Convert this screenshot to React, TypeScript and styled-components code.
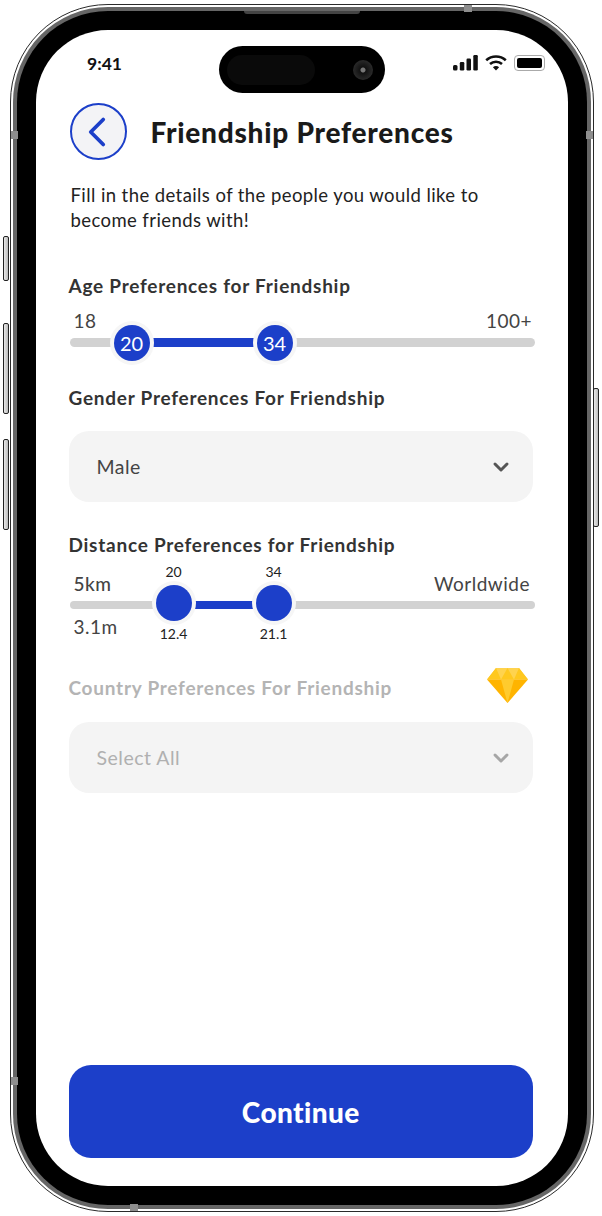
import React from "react";
import styled, { createGlobalStyle } from "styled-components";
import { ChevronDown, ChevronLeft } from "lucide-react";

const GlobalStyle = createGlobalStyle`
  html, body {
    margin: 0;
    padding: 0;
    background: #fff;
  }
  body {
    font-family: "Lato", "Noto Sans", sans-serif;
    color: #2b2b2b;
  }
`;

function App() {
  return (
    <>
      <GlobalStyle />
      <Shell>
        <SideKey $side="left" $top={231} $height={43} />
        <SideKey $side="left" $top={318} $height={89} />
        <SideKey $side="left" $top={434} $height={89} />
        <SideKey $side="right" $top={383} $height={137} />
        <Band $at="top" $offset={453} />
        <Band $at="bottom" $offset={119} />
        <Band $at="left" $offset={1072} />
        <Band $at="left" $offset={126} />
        <Band $at="right" $offset={126} />
        <Rim>
          <Bezel>
            <Speaker />
            <Screen>
              <StatusBar>
                <Time>9:41</Time>
                <Island>
                  <IslandSensor />
                  <Camera />
                </Island>
                <StatusIcons>
                  <svg width="25" height="16" viewBox="0 0 25 16" fill="#111">
                    <rect x="0" y="10" width="4.5" height="5.5" rx="1.5" />
                    <rect x="6.8" y="7" width="4.5" height="8.5" rx="1.2" />
                    <rect x="13.5" y="3.6" width="4.5" height="11.9" rx="1.2" />
                    <rect x="20.3" y="0" width="4.5" height="15.5" rx="1.2" />
                  </svg>
                  <svg width="22" height="16" viewBox="0 0 22 16" fill="none" stroke="#111" strokeWidth="2.6">
                    <path d="M1.2 5.2C6.8 0.2 15.2 0.2 20.8 5.2" />
                    <path d="M5 9C8.4 6 13.6 6 17 9" />
                    <path d="M11 15.4L7.9 12.2C9.7 10.7 12.3 10.7 14.1 12.2Z" fill="#111" stroke="none" />
                  </svg>
                  <Battery>
                    <BatteryFill />
                  </Battery>
                </StatusIcons>
              </StatusBar>

              <Content>
                <Header>
                  <BackButton>
                    <ChevronLeft size={50} strokeWidth={1.8} color="#1c3fc9" />
                  </BackButton>
                  <Title>Friendship Preferences</Title>
                </Header>
                <Intro>
                  Fill in the details of the people you would like to become friends with!
                </Intro>

                <AgeLabel>Age Preferences for Friendship</AgeLabel>
                <ScaleEnds>
                  <span>18</span>
                  <span>100+</span>
                </ScaleEnds>
                <Track>
                  <TrackFill $from={62} $to={205} />
                  <Thumb $at={62}>20</Thumb>
                  <Thumb $at={205}>34</Thumb>
                </Track>

                <GenderLabel>Gender Preferences For Friendship</GenderLabel>
                <Select>
                  Male
                  <ChevronDown size={24} strokeWidth={3} color="#555" />
                </Select>

                <DistanceLabel>Distance Preferences for Friendship</DistanceLabel>
                <ScaleEnds $tall>
                  <strong>5km</strong>
                  <span>Worldwide</span>
                </ScaleEnds>
                <Track $slim>
                  <TrackFill $from={104} $to={204} />
                  <Thumb $at={104} $lift={2}>
                    <ThumbCaption $pos="above">20</ThumbCaption>
                    <ThumbCaption $pos="below">12.4</ThumbCaption>
                  </Thumb>
                  <Thumb $at={204} $lift={2}>
                    <ThumbCaption $pos="above">34</ThumbCaption>
                    <ThumbCaption $pos="below">21.1</ThumbCaption>
                  </Thumb>
                </Track>
                <MilesLabel>3.1m</MilesLabel>

                <PremiumRow>
                  <PremiumLabel>Country Preferences For Friendship</PremiumLabel>
                  <svg width="41" height="35" viewBox="0 0 41 35">
                    <path d="M9 0H32L41 11.5H0Z" fill="#ffd34e" />
                    <path d="M9 0L14 11.5H0Z M32 0L27 11.5H41Z" fill="#ffc81f" />
                    <path d="M20.5 0L27 11.5H14Z" fill="#ffc81f" />
                    <path d="M0 11.5H41L20.5 35Z" fill="#ffb400" />
                    <path d="M14 11.5H27L20.5 35Z" fill="#ffcb2e" />
                  </svg>
                </PremiumRow>
                <Select $muted>
                  Select All
                  <ChevronDown size={24} strokeWidth={3} color="#a6a6a6" />
                </Select>

                <ContinueButton>Continue</ContinueButton>
              </Content>
            </Screen>
          </Bezel>
        </Rim>
      </Shell>
    </>
  );
}

const Shell = styled.div`
  position: relative;
  box-sizing: border-box;
  width: 584px;
  height: 1208px;
  margin: 4px 0 0 10px;
  padding: 2px;
  background: #fff;
  border: 1.5px solid #2a2a2a;
  border-radius: 98px;
`;

const SideKey = styled.div<{ $side: "left" | "right"; $top: number; $height: number }>`
  position: absolute;
  ${(p) => (p.$side === "left" ? "left: -8px;" : "right: -6px;")}
  top: ${(p) => p.$top}px;
  width: 4px;
  height: ${(p) => p.$height}px;
  background: linear-gradient(90deg, #e8e8e8, #bcbcbc);
  border: 1px solid #222;
  border-radius: 2px;
`;

const Band = styled.div<{ $at: "top" | "bottom" | "left" | "right"; $offset: number }>`
  position: absolute;
  z-index: 2;
  background: #8e8e8e;
  ${(p) =>
    p.$at === "top" || p.$at === "bottom"
      ? `left: ${p.$offset}px; ${p.$at}: 0; width: 8px; height: 7px;`
      : `top: ${p.$offset}px; ${p.$at}: 0; width: 7px; height: 8px;`}
`;

const Rim = styled.div`
  box-sizing: border-box;
  height: 100%;
  padding: 4px;
  background: #666;
  border-radius: 95px;
`;

const Bezel = styled.div`
  position: relative;
  box-sizing: border-box;
  height: 100%;
  padding: 19px;
  background: #000;
  border-radius: 91px;
`;

const Speaker = styled.div`
  position: absolute;
  top: 0;
  left: 50%;
  width: 116px;
  height: 3px;
  margin-left: -58px;
  background: #444;
  border-radius: 0 0 4px 4px;
`;

const Screen = styled.div`
  box-sizing: border-box;
  height: 100%;
  overflow: hidden;
  background: #fff;
  border-radius: 72px;
`;

const StatusBar = styled.div`
  display: grid;
  grid-template-columns: 183px 166px 1fr;
  align-items: center;
  height: 47px;
  padding-top: 16px;
`;

const Time = styled.div`
  padding-left: 51px;
  font-size: 17.5px;
  font-weight: 700;
  color: #111;
  margin-top: -13px;
`;

const Island = styled.div`
  display: flex;
  align-items: center;
  justify-content: space-between;
  height: 47px;
  padding: 0 12px 0 8px;
  box-sizing: border-box;
  background: #000;
  border-radius: 24px;
`;

const IslandSensor = styled.div`
  width: 88px;
  height: 30px;
  background: #0a0a0a;
  border-radius: 15px;
`;

const Camera = styled.div`
  box-sizing: border-box;
  width: 20px;
  height: 20px;
  border-radius: 50%;
  background: radial-gradient(circle, #777 0 2px, #111 3px, #2a2a2a 10px);
`;

const StatusIcons = styled.div`
  display: flex;
  align-items: center;
  gap: 7px;
  padding-left: 68px;
  margin-top: -14px;
`;

const Battery = styled.div`
  box-sizing: border-box;
  display: flex;
  width: 31px;
  height: 16px;
  padding: 2px;
  border: 1px solid #aaa;
  border-radius: 4px;
`;

const BatteryFill = styled.div`
  flex: 1;
  background: #000;
  border-radius: 2px;
`;

const Content = styled.div`
  display: flex;
  flex-direction: column;
  padding: 10px 35px 0 32.5px;
`;

const Header = styled.div`
  display: flex;
  align-items: center;
  gap: 24px;
  padding-left: 1px;
`;

const BackButton = styled.div`
  box-sizing: border-box;
  display: flex;
  flex: none;
  align-items: center;
  justify-content: center;
  width: 57px;
  height: 57px;
  padding-right: 3px;
  background: #f3f3f6;
  border: 2.5px solid #1c3fc9;
  border-radius: 50%;
`;

const Title = styled.h1`
  margin: 0;
  font-size: 28px;
  font-weight: 900;
  letter-spacing: 0.75px;
  white-space: nowrap;
  color: #1a1a1a;
`;

const Intro = styled.p`
  margin: 23px 0 0 2px;
  font-size: 18.5px;
  line-height: 25px;
  letter-spacing: 0.41px;
  color: #222;
`;

const SectionLabel = styled.h2`
  margin: 0;
  font-size: 19px;
  line-height: 24px;
  font-weight: 700;
  letter-spacing: 0.75px;
  white-space: nowrap;
  color: #333;
`;

const AgeLabel = styled(SectionLabel)`
  margin-top: 41px;
`;

const GenderLabel = styled(SectionLabel)`
  margin-top: 39px;
`;

const DistanceLabel = styled(SectionLabel)`
  margin-top: 31px;
`;

const PremiumRow = styled.div`
  display: flex;
  align-items: center;
  justify-content: space-between;
  margin-top: 29px;
  padding-right: 5px;
`;

const PremiumLabel = styled(SectionLabel)`
  padding-top: 5px;
  color: #b4b4b4;
`;

const ScaleEnds = styled.div<{ $tall?: boolean }>`
  display: flex;
  justify-content: space-between;
  padding: 0 ${(p) => (p.$tall ? "3px" : "1px")} 0 5px;
  margin-top: ${(p) => (p.$tall ? "13px" : "12px")};
  height: ${(p) => (p.$tall ? "28px" : "22px")};
  font-size: 19px;
  letter-spacing: 0.5px;
  line-height: ${(p) => (p.$tall ? "28px" : "22px")};
  color: #444;

  & strong {
    font-weight: 500;
  }
`;

const Track = styled.div<{ $slim?: boolean }>`
  position: relative;
  height: ${(p) => (p.$slim ? "8px" : "9px")};
  margin-top: ${(p) => (p.$slim ? "3px" : "6px")};
  margin-left: 1px;
  margin-right: -2px;
  background: #d2d2d2;
  border-radius: 5px;
`;

const TrackFill = styled.div<{ $from: number; $to: number }>`
  position: absolute;
  top: 0;
  bottom: 0;
  left: ${(p) => p.$from}px;
  width: ${(p) => p.$to - p.$from}px;
  background: #1c3fc9;
`;

const Thumb = styled.div<{ $at: number; $lift?: number }>`
  position: absolute;
  top: calc(50% - ${(p) => p.$lift ?? 0}px);
  left: ${(p) => p.$at}px;
  display: flex;
  align-items: center;
  justify-content: center;
  width: 36px;
  height: 36px;
  transform: translate(-50%, -50%);
  font-size: 20px;
  color: #fff;
  background: #1c3fc9;
  border-radius: 50%;
  box-shadow: 0 0 0 4px #f6f6f6;
`;

const ThumbCaption = styled.span<{ $pos: "above" | "below" }>`
  position: absolute;
  left: 50%;
  ${(p) => (p.$pos === "above" ? "top: -22px;" : "bottom: -22px;")}
  transform: translateX(-50%);
  font-size: 14px;
  line-height: 18px;
  color: #222;
`;

const MilesLabel = styled.div`
  margin: 6px 0 0 5px;
  font-size: 19px;
  letter-spacing: 0.5px;
  line-height: 24px;
  color: #444;
`;

const Select = styled.div<{ $muted?: boolean }>`
  box-sizing: border-box;
  display: flex;
  align-items: center;
  justify-content: space-between;
  height: 71px;
  margin-top: ${(p) => (p.$muted ? "19px" : "21px")};
  padding: 0 20px 0 28px;
  font-size: 19.5px;
  letter-spacing: 0.5px;
  color: ${(p) => (p.$muted ? "#b0b0b0" : "#444")};
  background: #f4f4f4;
  border-radius: 20px;
`;

const ContinueButton = styled.button`
  height: 93px;
  margin-top: 272px;
  border: 0;
  border-radius: 22px;
  font-family: inherit;
  font-size: 28px;
  font-weight: 900;
  letter-spacing: 0.4px;
  color: #fff;
  background: #1c3fc9;
`;

export default App;
